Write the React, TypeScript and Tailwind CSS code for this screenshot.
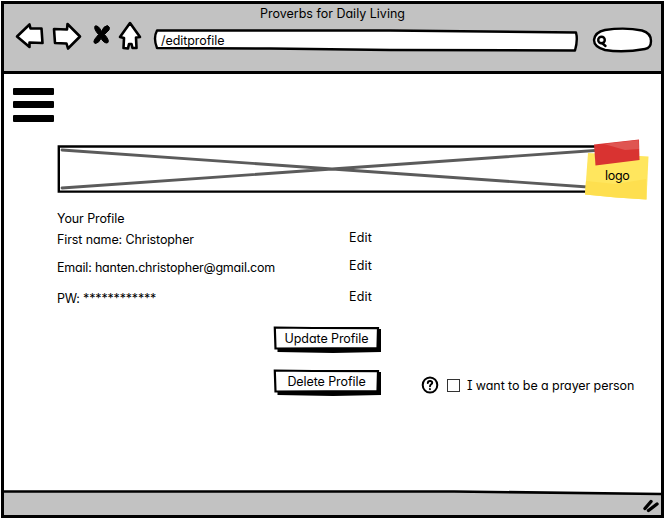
import React from "react";

const ink = { stroke: "#000", strokeWidth: 2.6, strokeLinejoin: "round" as const, strokeLinecap: "round" as const };

function Toolbar() {
  return (
    <header className="flex h-[67px] shrink-0 flex-col bg-[#c2c2c2]">
      <h1 className="h-[17px] pl-[256px] text-[12.5px] leading-[20px]">Proverbs for Daily Living</h1>
      <div className="flex h-[36px] items-start">
        <svg width="28" height="30" viewBox="15 22 28 30" className="ml-[11px] shrink-0 overflow-visible" fill="#fff" {...ink}>
          <path d="M17 37.500 L29.500 25.500 L30.500 29.500 L41.500 29.500 L42.500 44 L29.500 43.500 L29.500 48 Z" />
        </svg>
        <svg width="30" height="30" viewBox="52 22 30 30" className="ml-[9px] shrink-0 overflow-visible" fill="#fff" {...ink}>
          <path d="M54 30 L67 30.500 L67.500 25 L80 37.500 L68 49.500 L66.500 44.500 L55 44 Z" />
        </svg>
        <svg width="18" height="30" viewBox="93 22 18 30" className="ml-[11px] shrink-0 overflow-visible" stroke="#000" strokeWidth="1" strokeLinejoin="round">
          <path d="M95 27 Q98.500 26 101.500 32.500 Q103.500 27 107.500 26.500 Q110.500 28 109 31 L104.500 35.500 Q109.500 41 108 43.500 Q105 45.500 101 39.500 Q98.500 44.500 95 44.500 Q93 43.500 94.500 40.500 L98.500 35.500 Q93.500 30 95 27 Z" />
        </svg>
        <svg width="24" height="30" viewBox="118 22 24 30" className="ml-[7px] shrink-0 overflow-visible" fill="#fff" {...ink}>
          <path d="M130 24 L140 38 L136 38.500 L136.500 49 L132.500 49 L131.500 45 L129 45 L128 49.500 L123.500 49 L124 39 L120 38 Z" />
        </svg>
        <div className="relative ml-[10px] mt-[7px] h-[24px] w-[428px] shrink-0">
          <svg width="428" height="24" viewBox="152 29 428 24" className="absolute inset-0" fill="#fff" {...ink} strokeWidth="2.400">
            <path d="M157 31.500 L390 31.500 L576 33.500 Q578 41 575 51.500 L390 51 L270 49.500 L157 49 Q153 39 157 31.500 Z" />
          </svg>
          <span className="relative block pl-[9px] pt-[4px] text-[12.5px] leading-[18px] tracking-[-0.06px]">/editprofile</span>
        </div>
        <svg width="62" height="28" viewBox="592 27 62 28" className="ml-[12px] mt-[5px] shrink-0" fill="#fff" {...ink} strokeWidth="2.400">
          <path d="M605 31 Q625 28 642 31.500 Q651 34 651 42 Q651 49 645 50 Q623 54 605 51 Q594 48 594 41 Q595 33 605 31 Z" />
          <circle cx="601.500" cy="41" r="3.300" />
          <path d="M602 44 L605.500 47" />
        </svg>
      </div>
    </header>
  );
}

function Banner() {
  return (
    <div className="relative ml-[53px] mt-[22px] h-[48px] w-[592px]">
      <svg width="552" height="48" viewBox="57 145 552 48" fill="none" strokeLinecap="round">
        <path d="M58.800 146.500 H606 V191.600 H58.800 Z" stroke="#000" strokeWidth="2.400" />
        <path d="M62 150 L332 169 L602 188 M62 188 L332 169 L602 150" stroke="#5b5b5b" strokeWidth="2.800" />
      </svg>
      <div className="absolute left-[527px] top-[-7px] h-[62px] w-[65px]">
        <svg width="65" height="62" viewBox="584 138 65 62" className="absolute inset-0">
          <path d="M588 153 L648.500 156.500 L646.500 199.500 L616 197.500 L585 194.500 Z" fill="#ffe65e" />
          <path d="M586 181 L616 184 L646 179 L646.500 199.500 L616 197.500 L585 194.500 Z" fill="#fedf4f" />
          <path d="M594 144.500 L639 139.500 L639.500 160 L595.500 165.500 Z" fill="#d93331" />
          <path d="M604 144 L638.500 140 L639 149 L625 150 Z" fill="#df5551" />
        </svg>
        <span className="relative block pl-[21px] pt-[29px] text-[12.5px] leading-[18px] tracking-[-0.3px]">logo</span>
      </div>
    </div>
  );
}

function Field({ children, className, editClass }: { children: React.ReactNode; className: string; editClass: string }) {
  return (
    <div className={`flex items-start pl-[53px] text-[12.5px] leading-[18px] ${className}`}>
      <p className="w-[292px]">{children}</p>
      <button className={`tracking-[0.2px] ${editClass}`}>Edit</button>
    </div>
  );
}

function SketchButton({ label, className }: { label: string; className: string }) {
  return (
    <button className={`relative ml-[269px] h-[27px] w-[110px] ${className}`}>
      <svg width="110" height="27" viewBox="0 0 110 27" className="absolute inset-0">
        <path d="M4.500 23 L4.500 26 L60 27 L108 26 L108 3 L104 3 Z" />
        <path d="M1.800 1.500 L40 2 L105 2.200 L104.500 22 L2.500 22.500 Z" fill="#fff" stroke="#000" strokeWidth="2.200" />
      </svg>
      <span className="relative block w-[107px] pb-[1px] text-center text-[12.5px] leading-[18px] tracking-[-0.08px]">{label}</span>
    </button>
  );
}

export default function App() {
  return (
    <div className="h-[519px] w-[665px] overflow-hidden bg-white pl-px pt-px font-['Inter','Liberation_Sans',sans-serif] text-black" style={{ fontFeatureSettings: '"cv11" 1, "ss03" 1' }}>
      <div className="flex h-[517px] w-[663px] flex-col border-[3px] border-black">
        <Toolbar />
        <div className="h-[3px] shrink-0 bg-black" />
        <main className="h-[416px] shrink-0">
          <div className="flex h-[49px] w-[50px] flex-col pl-[9px] pt-[14px]">
            <span className="h-[7px] shrink-0 rounded-[1px] bg-black" />
            <span className="mt-[6px] h-[7px] shrink-0 rounded-[1px] bg-black" />
            <span className="mt-[7px] h-[7px] shrink-0 rounded-[1px] bg-black" />
          </div>
          <Banner />
          <h2 className="mt-[17px] pl-[53px] text-[12.5px] leading-[18px] tracking-[-0.1px]">Your Profile</h2>
          <Field className="mt-[3px] tracking-[-0.1px]" editClass="mt-[-2px]">First name: Christopher</Field>
          <Field className="mt-[10px] tracking-[-0.2px]" editClass="mt-[-2px]">Email: hanten.christopher@gmail.com</Field>
          <Field className="mt-[13px] tracking-[-0.17px]" editClass="mt-[-2px]">PW: ************</Field>
          <SketchButton label="Update Profile" className="mt-[18px] block" />
          <div className="mt-[16px] flex items-start">
            <SketchButton label="Delete Profile" className="shrink-0" />
            <svg width="18" height="18" viewBox="0 0 18 18" className="ml-[38px] mt-[7px] shrink-0" fill="none" stroke="#000" strokeWidth="2" strokeLinecap="round">
              <ellipse cx="9" cy="9" rx="7.300" ry="7.600" />
              <path d="M6.800 7 Q7 4.700 9.300 4.900 Q11.800 5.300 11 7.500 Q9 8.800 9 10.300 M8.900 13 L9 13.100" />
            </svg>
            <span className="ml-[8px] mt-[10px] size-[13px] shrink-0 border border-[#333]" />
            <label className="ml-[7px] mt-[8px] whitespace-nowrap text-[12.5px] leading-[18px] tracking-[-0.08px]" style={{ fontFeatureSettings: '"cv11" 1, "cv08" 1' }}>I want to be a prayer person</label>
          </div>
        </main>
        <footer className="relative flex flex-1 justify-end bg-[#c2c2c2]">
          <svg width="657" height="6" viewBox="0 0 657 6" className="absolute left-0 top-0">
            <path d="M0 0 H657 V4 L450 1.500 H0 Z" fill="#fff" />
            <path d="M0 1.500 L450 1.500 L657 4" fill="none" stroke="#000" strokeWidth="2.600" />
          </svg>
          <svg width="18" height="16" viewBox="642 498 18 16" className="mt-[8px] overflow-visible" stroke="#000" strokeWidth="3.400" strokeLinecap="round">
            <path d="M644 508.500 L650 501.500 M647.500 510.500 L656 504" />
          </svg>
        </footer>
      </div>
    </div>
  );
}
